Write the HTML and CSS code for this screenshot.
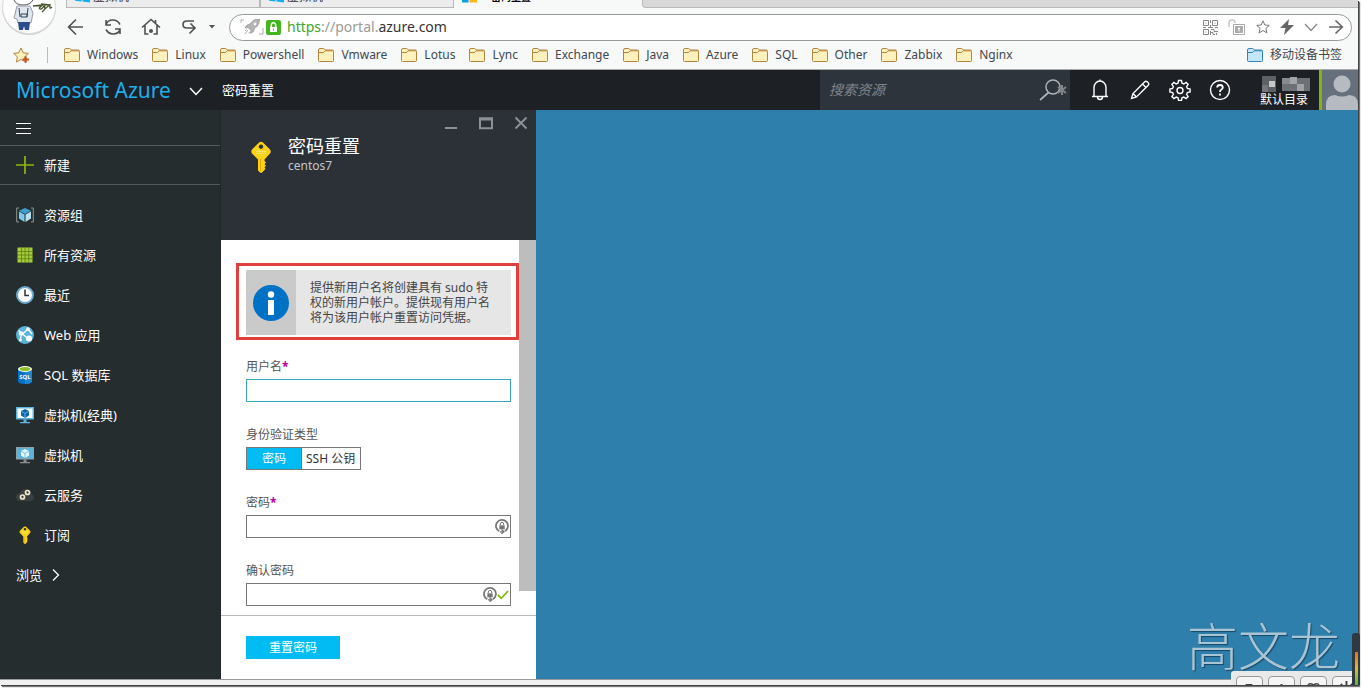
FILE: index.html
```html
<!DOCTYPE html>
<html lang="zh-CN">
<head>
<meta charset="utf-8">
<title>密码重置 - Microsoft Azure</title>
<link rel="stylesheet" href="styles.css">
</head>
<body>
<svg class="defs" aria-hidden="true">
  <defs>
    <symbol id="folder" viewBox="0 0 16 14"><path d="M.5 12.500V2Q.5.500 2 .500h3.500q.8 0 1.200.7l.5.800h7q1.300 0 1.300 1.300v9.200q0 1-1 1h-13q-1 0-1-1z" fill="#fff1bd" stroke="#b5843c"/><path d="M1 4.500h4.500l1.500-1.700h8" fill="none" stroke="#b5843c"/></symbol>
    <symbol id="folder-blue" viewBox="0 0 16 14"><path d="M.5 12.500V2Q.5.500 2 .500h3.500q.8 0 1.200.7l.5.800h7q1.300 0 1.300 1.300v9.200q0 1-1 1h-13q-1 0-1-1z" fill="#c3e6fb" stroke="#3684b5"/><path d="M1 4.500h4.500l1.500-1.700h8" fill="none" stroke="#3684b5"/></symbol>
    <symbol id="winlogo" viewBox="0 0 16 16"><path d="M0 2.500 7 1.500V8H0zM8 1.300 16 0v8H8zM0 9h7v6L0 14zM8 9h8v7l-8-1z" fill="#12aef0"/></symbol>
    <symbol id="key" viewBox="0 0 20 32"><path fill="#fcd116" fill-rule="evenodd" d="M8 1.500q2-1.500 4 0l7 7q1.500 2 0 4l-5.500 6v1.500l1.500 1.500-1.500 1.700 1.500 1.500-1.500 1.800 1 1.500-3.500 3.500q-1 .8-2 0L7 29.500v-11l-6-6q-1.500-2 0-4zM10 3.500a2.200 2.200 0 1 0 .01 0z"/><path d="M5 10.300h10M5 12.300h10" stroke="#fff0a0" stroke-width=".8"/><path d="M9.500 18v12" stroke="#e0a800"/></symbol>
    <symbol id="pwd" viewBox="0 0 14 15"><path d="M4.300 12.300A6 6 0 1 1 10 12.100" fill="none" stroke="#777" stroke-width="1.800"/><path d="M5 12.800h3.500M6.500 10.500l2.500 2.300-2.500 2" fill="none" stroke="#777" stroke-width="1.300"/><path d="M4.300 6.300h5.400v4H4.300z" fill="#777"/><path d="M5.300 6V5a1.700 1.700 0 0 1 3.400 0v1" fill="none" stroke="#777"/></symbol>
  </defs>
</svg>
<div class="window">
  <div class="tabs">
    <div class="tab tab-first"><svg class="tab-icon"><use href="#winlogo"/></svg><span>虚拟机</span></div>
    <div class="tab"><svg class="tab-icon"><use href="#winlogo"/></svg><span>虚拟机</span></div>
    <div class="tab tab-active"><svg class="tab-icon" viewBox="0 0 16 16"><path d="M0 9h7v7H0z" fill="#0b9fe6"/><path d="M8 9h8v7H8z" fill="#fbb514"/></svg><span>密码重置</span></div>
    <div class="tab-rest"></div>
  </div>
  <div class="toolbar">
    <button class="nav" aria-label="后退"><svg width="18" height="18" viewBox="0 0 18 18"><path d="M16 9H2M9 1.500 1.500 9 9 16.500"/></svg></button>
    <button class="nav" aria-label="刷新"><svg width="18" height="18" viewBox="0 0 18 18"><path d="M2 7q1-5 7-5 4.500 0 7 4.500M2 2v5h5M16 11q-1 5-7 5-4.500 0-7-4.500M16 16v-5h-5"/></svg></button>
    <button class="nav" aria-label="主页"><svg width="20" height="18" viewBox="0 0 20 18"><path d="M1 9.500 10 1.500l9 8M4 7.500V16h3.500M16 7.500V16h-3.500M14.500 2v3"/><circle cx="10" cy="13" r="2" fill="#505050" stroke="none"/></svg></button>
    <button class="nav" aria-label="撤销"><svg width="18" height="18" viewBox="0 0 18 18"><path d="M14 3H7Q3 3 3 6.500T7 10h8M10.500 5.500l4.500 4.500-5.500 5.500"/></svg></button>
    <button class="nav nav-more" aria-label="更多"><svg width="6" height="4" viewBox="0 0 6 4"><path d="M0 0h6L3 3.500z" fill="#555" stroke="none"/></svg></button>
    <div class="address">
      <svg class="rocket" width="24" height="16" viewBox="0 0 24 16"><path d="M1 4V1h3M19 15h4V9" fill="none" stroke="#aaa"/><path d="M19 0q-6 0-9 5L7 6 5 9l3-.5 3 3-.5 3 3-2 1-3q5-3 5-9.500zM8 11l-3 4M6.500 10.500 5 12M10 12.500l-1.500 2" fill="#b4b4b4" stroke="#999" stroke-width=".8"/><circle cx="15" cy="5" r="1.400" fill="#fff"/></svg>
      <svg width="15" height="15" viewBox="0 0 15 15"><rect width="15" height="15" rx="2" fill="#43b51f"/><path d="M4 7h7v5H4z" fill="#fff"/><path d="M5.300 7V5a2.200 2.200 0 0 1 4.400 0v2" fill="none" stroke="#fff" stroke-width="1.500"/><path d="M7 8.500h1v2H7z" fill="#43b51f"/></svg>
      <div class="url"><span class="scheme">https</span><span class="dim">://portal.</span>azure.com</div>
      <div class="address-tools">
        <svg width="15" height="15" viewBox="0 0 15 15" fill="none" stroke="#888"><path d="M.5.500h5v5h-5zM9.500.500h5v5h-5zM.5 9.500h5v5h-5zM2.500 3h1M11.500 3h1M2.500 12h1M7.500 0v3M7.500 5v3M0 7.500h3M5 7.500h5M12 7.500h3M8 9.500h3v2h4M8 12.500h2v2h2M13.500 13v2M7.500 11v4" /></svg>
        <svg width="18" height="17" viewBox="0 0 18 17" fill="none" stroke="#aaa"><path d="M1 8V3Q1 1 3 1h2q2 0 2 2v1M5.500 5.500h11v10h-11z"/><path d="M7.500 7.500h7v6h-7z" fill="#aaa"/><path d="M11 8.500v4M10 9.500h2" stroke="#fff"/></svg>
        <svg width="14" height="14" viewBox="0 0 14 14" fill="none" stroke="#777"><path d="M7 .8l1.800 4.200 4.500.4-3.400 3 1 4.500L7 10.500l-3.900 2.400 1-4.500-3.400-3L5.200 5z"/></svg>
        <svg width="14" height="16" viewBox="0 0 14 16"><path d="M9 0 0 9h5.500L4 16l10-10H8z" fill="#666"/></svg>
        <svg width="14" height="14" viewBox="0 0 14 14" fill="none" stroke="#888" stroke-width="1.300"><path d="M1 4l6 6.500L13 4"/></svg>
        <svg width="16" height="16" viewBox="0 0 16 16" fill="none" stroke="#666" stroke-width="1.700"><path d="M1 8h13M7.500 1.500 14.300 8l-6.800 6.500"/></svg>
      </div>
    </div>
  </div>
  <nav class="bookmarks" aria-label="书签">
    <svg class="fav" width="18" height="17" viewBox="0 0 18 17"><path d="M8 1l2.200 4.800 5.200.6-3.800 3.500 1 5.100L8 12.500 3.400 15l1-5.100L.7 6.400l5-.6z" fill="#fff1bd" stroke="#b5843c"/><path d="M9.500 12.500h6.500M12.700 9.300v6.500" stroke="#c8501c" stroke-width="2"/></svg>
    <i class="sep"></i>
    <a href="#"><svg><use href="#folder"/></svg>Windows</a>
    <a href="#"><svg><use href="#folder"/></svg>Linux</a>
    <a href="#"><svg><use href="#folder"/></svg>Powershell</a>
    <a href="#"><svg><use href="#folder"/></svg>Vmware</a>
    <a href="#"><svg><use href="#folder"/></svg>Lotus</a>
    <a href="#"><svg><use href="#folder"/></svg>Lync</a>
    <a href="#"><svg><use href="#folder"/></svg>Exchange</a>
    <a href="#"><svg><use href="#folder"/></svg>Java</a>
    <a href="#"><svg><use href="#folder"/></svg>Azure</a>
    <a href="#"><svg><use href="#folder"/></svg>SQL</a>
    <a href="#"><svg><use href="#folder"/></svg>Other</a>
    <a href="#"><svg><use href="#folder"/></svg>Zabbix</a>
    <a href="#"><svg><use href="#folder"/></svg>Nginx</a>
    <a href="#" class="mobile"><svg><use href="#folder-blue"/></svg>移动设备书签</a>
  </nav>
  <svg class="profile" width="60" height="36" viewBox="0 0 60 36"><circle cx="29" cy="8" r="27" fill="#ccc"/><circle cx="29" cy="7" r="26.500" fill="#fff" stroke="#ddd"/><path d="M14 0q2 5 9 5t10-5" fill="#fff" stroke="#555"/><path d="M17 6l-3 12 3 1 1 4h13l1-5 1-5-3-7z" fill="#dfe6ee" stroke="#99a"/><path d="M19 8l1 9M28 8l-1 9M21 14h6v3h-6z" stroke="#345" fill="none"/><path d="M18 22h12l-1 8h-4l-1-4-1 4h-4z" fill="#2c4b8c"/><path d="M33 6l10-1q-5 3-3 4t5-5q-1 6 1 4t4-3q-1 5 2 2M41 4l9 1M45 9l-3 3" fill="none" stroke="#46552b" stroke-width="1.300"/></svg>

  <header class="topbar">
    <a class="brand" href="#">Microsoft Azure</a>
    <button class="brand-more" aria-label="展开"><svg width="14" height="9" viewBox="0 0 14 9"><path d="M1 1l6 6.500L13 1" fill="none" stroke="#fff" stroke-width="1.500"/></svg></button>
    <span class="crumb">密码重置</span>
    <label class="search">
      <input type="text" placeholder="搜索资源" aria-label="搜索资源">
      <svg width="30" height="22" viewBox="0 0 30 22" fill="none" stroke="#aeb2b7"><circle cx="14" cy="8" r="7" stroke-width="1.500"/><path d="M9.500 13.500 1 21" stroke-width="1.700"/><path d="M23 6v10M19 8l8 6M27 8l-8 6" stroke="#80858b" stroke-width="2"/></svg>
    </label>
    <button class="tool" aria-label="通知"><svg width="18" height="22" viewBox="0 0 18 22"><path d="M1 17.500h16M3 17.500V8.500a6 6.500 0 0 1 12 0v9M6.500 18a2.500 2.500 0 0 0 5 0M9 .5V2"/></svg></button>
    <button class="tool" aria-label="编辑"><svg width="20" height="20" viewBox="0 0 20 20"><path d="M1.500 18.500 3 13.500 14.500 2q1.500-1.500 3 0l.5.500q1.500 1.500 0 3L6.500 17zM3 13.500 6.500 17M12.500 4l3.500 3.500"/></svg></button>
    <button class="tool" aria-label="设置"><svg width="22" height="22" viewBox="0 0 22 22"><path d="M9.500 1.500h3l.5 2.700 1.800.8 2.300-1.600 2 2-1.500 2.300.8 1.800 2.700.5v3l-2.700.5-.8 1.800 1.500 2.300-2 2-2.300-1.500-1.800.7-.5 2.700h-3L9 18.800l-1.800-.7-2.300 1.500-2-2 1.500-2.300-.8-1.800L.9 13v-3l2.700-.5.8-1.800-1.500-2.300 2-2L7.200 5 9 4.200z"/><circle cx="11" cy="11.500" r="3"/></svg></button>
    <button class="tool" aria-label="帮助"><svg width="22" height="22" viewBox="0 0 22 22"><circle cx="11" cy="11" r="9.500"/><path d="M8.200 8.500Q8.200 6 11 6t2.800 2.500q0 1.200-1.400 2T11 13M11 14.500v2" stroke-width="1.800"/></svg></button>
    <div class="account">
      <svg width="50" height="16" viewBox="0 0 50 16"><path d="M2 0h14v16H2z" fill="#5d6064"/><path d="M2 9h6v7H2z" fill="#75787b"/><path d="M9 5h6v6H9z" fill="#c5c6c8"/><path d="M22 2h28v13H22z" fill="#6d7074"/><path d="M22 2h8v6h-8z" fill="#898b8f"/><path d="M30 1h7v7h-7z" fill="#a2a4a7"/><path d="M37 8h7v7h-7z" fill="#a0a2a5"/></svg>
      <span>默认目录</span>
    </div>
    <svg class="avatar" width="36" height="40" viewBox="0 0 36 40"><path d="M0 0h36v40H0z" fill="#66707d"/><circle cx="20" cy="14" r="8.500" fill="#b5bbc1"/><path d="M4 40V35q0-10 9-10 7 3 14 0 9 0 9 10v5z" fill="#b5bbc1"/></svg>
  </header>

  <main class="portal">
    <nav class="sidebar">
      <button class="burger" aria-label="菜单"><svg width="15" height="12" viewBox="0 0 15 12"><path d="M0 1.500h15M0 6.500h15M0 11.500h15" stroke="#fff"/></svg></button>
      <a class="create" href="#"><svg width="18" height="18" viewBox="0 0 18 18"><path d="M9 0v18M0 9h18" stroke="#8cb811" stroke-width="1.700"/></svg>新建</a>
      <div class="items">
      <a href="#"><svg viewBox="0 0 18 18"><path d="M3 2H.700v14H3M15 2h2.300v14H15" fill="none" stroke="#899"/><path d="M9 2l6 2.700L9 8 3 4.700z" fill="#3c9fd0"/><path d="M3 5.500l5.500 3V16L3 12.500z" fill="#7ec9ea"/><path d="M15 5.500l-5.500 3V16l5.500-3.500z" fill="#b7e0f2"/></svg>资源组</a>
      <a href="#"><svg viewBox="0 0 18 18"><path d="M1.500 1.500h15v15h-15z" fill="#a4cd39"/><path d="M5.500 1.500v15M9 1.500v15M12.700 1.500v15M1.500 5.500h15M1.500 9h15M1.500 12.700h15" stroke="#5d7c12" stroke-width=".8"/></svg>所有资源</a>
      <a href="#"><svg viewBox="0 0 18 18"><circle cx="9" cy="9" r="8" fill="#fff" stroke="#6ba9ca" stroke-width="2"/><path d="M9 3.500v6h4" fill="none" stroke="#333" stroke-width="1.500"/></svg>最近</a>
      <a href="#"><svg viewBox="0 0 18 18"><circle cx="9" cy="9" r="9" fill="#59b4d9"/><path d="M2.500 4.500 13 13.500M5 9.500 12 3M12 3l4 5M5 10l-1 5" stroke="#fff" stroke-width="1.300" fill="none"/><circle cx="5" cy="7.500" r="2.300" fill="#fff"/><circle cx="12" cy="3" r="1.800" fill="#fff"/><circle cx="13" cy="12.500" r="3" fill="#fff"/><circle cx="4.500" cy="14" r="1.300" fill="#fff"/></svg>Web 应用</a>
      <a href="#"><svg viewBox="0 0 18 18"><path d="M2 3v12q0 3 7 3t7-3V3z" fill="#0072c6"/><path d="M9 5h7v10q0 3-7 3z" fill="#1e86cf"/><ellipse cx="9" cy="3" rx="7" ry="3" fill="#fff"/><ellipse cx="9" cy="3" rx="5.500" ry="2" fill="#8cbf26"/><text x="9" y="13" text-anchor="middle" class="sql">SQL</text></svg>SQL 数据库</a>
      <a href="#"><svg viewBox="0 0 18 18"><path d="M0 1h18v12.500H0z" fill="#5bb5df"/><path d="M1.500 2.500h15v9.500h-15z" fill="#fff"/><path d="M9 3l4 2v4.500L9 12 5 9.500V5z" fill="#0d65a5"/><path d="M5 5l4 2.500L13 5M9 7.500V12" stroke="#6fc1ea" fill="none" stroke-width=".8"/><path d="M7.500 13.500h3V16H14v1.200H4V16h3.500z" fill="#5bb5df"/></svg>虚拟机(经典)</a>
      <a href="#"><svg viewBox="0 0 18 18"><path d="M0 1h18v12.500H0z" fill="#8ca3ad"/><path d="M1.200 2.200h15.600v10H1.200z" fill="#59b4d9"/><path d="M9 3l4 2v4.500L9 12 5 9.500V5z" fill="#e8f6fc"/><path d="M5 5l4 2.500L13 5M9 7.500V12" stroke="#59b4d9" fill="none" stroke-width=".8"/><path d="M7.500 13.500h3V16H14v1.200H4V16h3.500z" fill="#8b8f90"/></svg>虚拟机</a>
      <a href="#"><svg viewBox="0 0 18 18"><path d="M4 15a4 4 0 0 1 0-8q1-4 6-4 5 0 5.500 5a3.600 3.600 0 0 1-1 7z" fill="#3a3f3f"/><circle cx="6.500" cy="11" r="2" fill="none" stroke="#eee7ca" stroke-width="1.700"/><circle cx="11.500" cy="6.500" r="2" fill="none" stroke="#eee7ca" stroke-width="1.700"/></svg>云服务</a>
      <a href="#"><svg><use href="#key"/></svg>订阅</a>
      </div>
      <a class="browse" href="#">浏览<svg width="8" height="12" viewBox="0 0 8 12"><path d="M1 .5 6.500 6 1 11.500" fill="none" stroke="#fff" stroke-width="1.300"/></svg></a>
    </nav>

    <section class="blade">
      <div class="blade-head">
        <div class="blade-controls">
          <button aria-label="最小化"><svg width="14" height="14" viewBox="0 0 14 14"><path d="M1 12h12" stroke-width="2"/></svg></button>
          <button aria-label="最大化"><svg width="14" height="14" viewBox="0 0 14 14"><path d="M1 2.500h12v9.800H1z" stroke-width="2"/><path d="M0 3h14" stroke-width="3"/></svg></button>
          <button aria-label="关闭"><svg width="14" height="14" viewBox="0 0 14 14"><path d="M1.500 1.500l11 11M12.500 1.500l-11 11" stroke-width="1.900"/></svg></button>
        </div>
        <div class="blade-title">
          <svg width="20" height="32"><use href="#key"/></svg>
          <div><h1>密码重置</h1><p>centos7</p></div>
        </div>
      </div>
      <form class="blade-form">
        <div class="blade-body">
          <div class="fields">
            <div class="info">
              <div class="info-icon"><svg width="36" height="36" viewBox="0 0 36 36"><circle cx="18" cy="18" r="18" fill="#0072c6"/><circle cx="18" cy="9.500" r="3.200" fill="#fff"/><path d="M15 15h6v15h-6z" fill="#fff"/></svg></div>
              <p>提供新用户名将创建具有 sudo 特权的新用户帐户。提供现有用户名将为该用户帐户重置访问凭据。</p>
            </div>
            <div class="field"><label for="user">用户名<b>*</b></label><input class="box box-focus" id="user" type="text"></div>
            <fieldset class="field"><legend>身份验证类型</legend>
              <div class="toggle">
                <label class="on"><input type="radio" name="auth" checked>密码</label><label><input type="radio" name="auth">SSH 公钥</label>
              </div>
            </fieldset>
            <div class="field"><label for="pw">密码<b>*</b></label>
              <div class="box-wrap"><input class="box" id="pw" type="password"><span class="marks"><svg width="14" height="15"><use href="#pwd"/></svg></span></div></div>
            <div class="field"><label for="pw2">确认密码</label>
              <div class="box-wrap"><input class="box" id="pw2" type="password"><span class="marks"><svg width="14" height="15"><use href="#pwd"/></svg><svg width="12" height="10" viewBox="0 0 12 10"><path d="M1 5l3.300 3.300L11 1" fill="none" stroke="#7fba00" stroke-width="1.800"/></svg></span></div></div>
          </div>
          <div class="scroll"><i></i></div>
        </div>
        <div class="blade-foot"><button type="button">重置密码</button></div>
      </form>
    </section>
    <section class="canvas"><span class="signature">高文龙</span></section>
  </main>
  <footer class="status"></footer>
  <div class="ime">
    <span><svg viewBox="0 0 26 12"><path d="M9 8h7M12.500 8v4M18 8v4" stroke="#444" stroke-width="2" fill="none"/></svg></span>
    <span><svg viewBox="0 0 26 12"><path d="M13 7v5" stroke="#444" stroke-width="2"/></svg></span>
    <span><svg viewBox="0 0 26 12"><path d="M7 12V9q1-3 4-2l2 1 2-1q3-1 4 2v3" stroke="#444" stroke-width="1.500" fill="none"/></svg></span>
    <span><svg viewBox="0 0 26 12"><path d="M14 4v8M8 7l4 4M20 7l-4 4M9 12h10" stroke="#444" stroke-width="2"/></svg></span>
  </div>
</div>
<div class="meter"><i></i></div>
</body>
</html>
```
FILE: styles.css
```css
* { box-sizing: border-box; }
body {
  margin: 0;
  height: 100vh;
  overflow: hidden;
  padding: 0 4px 4px 0;
  background: #fff;
  font: 12px/16px "Noto Sans", "Noto Sans CJK SC", sans-serif;
  color: #333;
}
a { color: inherit; text-decoration: none; }
button { border: 0; padding: 0; background: none; font: inherit; color: inherit; }
svg { display: block; flex: none; }
.defs { position: absolute; width: 0; height: 0; }
.window {
  position: relative;
  display: flex;
  flex-direction: column;
  height: 100%;
  overflow: hidden;
  box-shadow: 1px 1px 0 #444, 2px 2px 1px #777;
}

/* browser chrome */
.tabs { display: flex; height: 8px; background: #f7f8f8; padding-left: 66px; }
.tab {
  display: flex;
  align-items: flex-end;
  gap: 3px;
  width: 194px;
  height: 8px;
  padding: 0 8px 4px;
  background: #ececec;
  border: solid #b8b8b8;
  border-width: 0 1px 1px;
}
.tab-icon { width: 15px; height: 16px; }
.tab span { line-height: 12px; white-space: nowrap; }
.tab-active { width: 188px; background: #f7f8f8; border: 0; padding-bottom: 5px; gap: 14px; color: #000; font-weight: 700; }
.tab-active span { font-size: 10px; }
.tab-rest { flex: 1; background: #d9d9d9; border: solid #b8b8b8; border-width: 0 0 1px 1px; border-bottom-left-radius: 4px; }
.toolbar {
  display: flex;
  align-items: center;
  gap: 19px;
  height: 38px;
  padding: 0 6px 0 67px;
  background: #f7f8f8;
}
.nav svg { fill: none; stroke: #505050; stroke-width: 1.6; }
.nav-more { margin: 0 -5px 0 -8px; }
.address {
  flex: 1;
  display: flex;
  align-items: center;
  gap: 2px;
  height: 27px;
  padding: 0 7px 0 10px;
  border: 1px solid #999;
  border-radius: 14px;
  background: #fff;
}
.url { margin-left: 4px; font-size: 14px; line-height: 20px; color: #333; }
.scheme { color: #43a62b; }
.dim { color: #999; }
.address-tools { display: flex; align-items: center; gap: 10px; margin-left: auto; }
.bookmarks {
  display: flex;
  align-items: center;
  gap: 14px;
  height: 24px;
  padding: 0 16px 5px 13px;
  background: #f7f8f8;
  border-bottom: 1px solid #aaa;
  color: #41484e;
}
.bookmarks a { display: flex; align-items: center; gap: 7px; }
.bookmarks a svg { width: 16px; height: 14px; }
.bookmarks .mobile { margin-left: auto; }
.fav { margin-right: 2px; }
.sep { width: 1px; height: 16px; background: #bbb; margin-right: 2px; }
.profile { position: absolute; left: 0; top: 0; }

/* portal header */
.topbar { display: flex; align-items: center; height: 40px; background: #1d2025; color: #fff; padding-left: 16px; }
.brand { font: 21px/28px "Noto Sans", sans-serif; color: #1fafe9; }
.brand-more { margin: 2px 19px 0 18px; }
.crumb { font-size: 13px; }
.search { display: flex; align-items: center; width: 250px; height: 40px; margin: 0 10px 0 auto; padding: 0 1px 0 9px; background: #2e343c; }
.search input { flex: 1; min-width: 0; border: 0; padding: 0; background: none; color: #fff; font: italic 14px/20px "Noto Sans", "Noto Sans CJK SC", sans-serif; outline: 0; }
.search input::placeholder { color: #80858b; opacity: 1; }
.tool { display: grid; place-items: center; width: 40px; height: 40px; }
.tool svg { fill: none; stroke: #fff; stroke-width: 1.4; }
.account { width: 79px; height: 40px; padding: 6px 0 0 20px; line-height: 16px; }
.avatar { border-left: 3px solid #82b414; width: 39px; background: #66707d; }

/* portal body */
.portal { flex: 1; display: flex; min-height: 0; background: #2e7fab; }
.sidebar { width: 221px; background: #262d2f; color: #fff; font-size: 13px; border-right: 1px solid #222628; }
.burger { display: flex; align-items: center; width: 100%; height: 36px; padding-left: 16px; border-bottom: 1px solid #54595b; }
.sidebar a { display: flex; align-items: center; gap: 10px; height: 40px; padding-left: 16px; }
.sidebar .create { height: 39px; border-bottom: 1px solid #54595b; }
.items { padding-top: 10px; }
.items svg { width: 18px; height: 18px; }
.sql { font: 700 6px "Noto Sans", sans-serif; fill: #fff; }

.blade { display: flex; flex-direction: column; width: 315px; background: #fff; }
.blade-head { height: 130px; background: #2c3138; color: #fff; }
.blade-controls { display: flex; justify-content: flex-end; gap: 21px; padding: 6px 8px 0; }
.blade-controls svg { fill: none; stroke: #8d9094; }
.blade-title { display: flex; align-items: flex-end; gap: 17px; padding: 4px 0 0 30px; }
.blade-title h1 { margin: 0; font-size: 18px; line-height: 24px; font-weight: 400; }
.blade-title p { margin: 0; line-height: 15px; padding-bottom: 0; color: #c3c6c8; }
.blade-form { flex: 1; display: flex; flex-direction: column; min-height: 0; }
.blade-body { flex: 1; display: flex; min-height: 0; }
.fields { flex: 1; padding: 30px 8px 0 25px; }
.info { position: relative; display: flex; height: 65px; margin-bottom: 24px; background: #e6e6e6; }
.info::after { content: ""; position: absolute; inset: -7px -8px -5px -10px; border: 3px solid #e03f3d; }
.info-icon { display: grid; place-items: center; width: 50px; background: #cacaca; }
.info p { flex: 1; margin: 0; padding: 10px 14px 0; line-height: 15px; color: #444; }
.field { display: block; margin: 0 0 25px; padding: 0; border: 0; min-width: 0; }
.field > label, legend { display: block; margin-bottom: 4px; padding: 0; line-height: 16px; color: #555; }
.field b { color: #b4009e; }
.box { display: block; width: 100%; height: 23px; padding: 0 6px; border: 1px solid #777; background: #fff; outline: 0; }
.box-focus { border-color: #3ba5bd; }
.box-wrap { position: relative; }
.marks { position: absolute; right: 2px; top: 4px; display: flex; align-items: center; }
.toggle { display: inline-flex; height: 23px; border: 1px solid #777; vertical-align: top; }
.toggle label { padding: 0 5px 0 4px; line-height: 21px; }
.toggle .on { padding: 0 15px; background: #00bcf2; color: #fff; border-right: 1px solid #777; }
.toggle input { position: absolute; opacity: 0; width: 1px; height: 1px; margin: 0; }
.scroll { width: 17px; padding-bottom: 24px; }
.scroll i { display: block; height: 100%; background: #bdbdbd; }
.blade-foot { height: 64px; padding: 20px 25px; border-top: 1px solid #bbb; }
.blade-foot button { display: block; width: 94px; height: 23px; background: #00bcf2; color: #fff; }

.canvas { flex: 1; display: flex; justify-content: flex-end; align-items: flex-end; padding: 0 18px 5px; }
.signature { font: 300 51px/60px "Noto Sans CJK SC", sans-serif; color: #a9c4d4; text-shadow: 1px 1px 1px #174866; }
.status { height: 6px; background: #f0f0f0; border-top: 1px solid #999; }
.ime { position: absolute; right: 0; bottom: 0; display: flex; gap: 5px; width: 127px; height: 14px; padding: 5px 0 0 5px; overflow: hidden; border-radius: 3px 0 0 0; background: #e9e9e9; }
.ime span { flex: none; width: 27px; height: 14px; border: 1px solid #999; border-radius: 4px; background: #f5f5f5; }
.ime svg { height: 12px; width: 25px; }
.meter { position: absolute; right: 2px; bottom: 4px; width: 8px; height: 52px; padding: 19px 2px 0 3px; border-radius: 3px 3px 0 0; background: #303840; }
.meter i { display: block; height: 100%; background: linear-gradient(#d8702b, #d8bd35, #55b645); }
```
